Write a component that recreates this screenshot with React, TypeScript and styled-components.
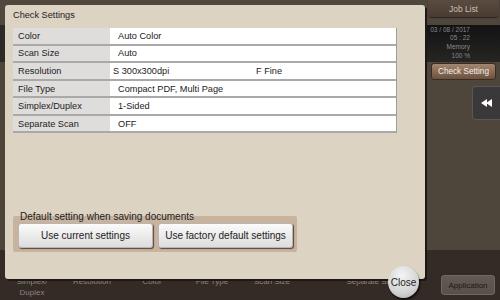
import * as React from 'react';
import styled, {createGlobalStyle} from "styled-components";

const GlobalStyle = createGlobalStyle`
  html, body {
    margin: 0;
    padding: 0;
    background: #342a26;
  }
  body {
    font-family: "Liberation Sans", Arial, sans-serif;
  }
`;

const rows = [
    {label: "Color", value: "Auto Color"},
    {label: "Scan Size", value: "Auto"},
    {label: "Resolution", value: "S 300x300dpi", extra: "F Fine"},
    {label: "File Type", value: "Compact PDF, Multi Page"},
    {label: "Simplex/Duplex", value: "1-Sided"},
    {label: "Separate Scan", value: "OFF"},
];

const tabs = [
    {label: "Simplex/\nDuplex"},
    {label: "Resolution"},
    {label: "Color"},
    {label: "File Type"},
    {label: "Scan Size"},
    {label: "Separate Scan", offset: 41},
];

export default function App() {
    return (
        <>
            <GlobalStyle/>
            <Screen>
                <MainArea>
                    <TopStrip/>
                    <DarkBand/>
                </MainArea>

                <SidePanel>
                    <JobList>Job List</JobList>
                    <StatusBox>
                        <StatusText>
                            <div>03 / 08 / 2017</div>
                            <div>05 : 22</div>
                            <div>Memory</div>
                            <div>100 %</div>
                        </StatusText>
                    </StatusBox>
                    <CheckSetting>Check Setting</CheckSetting>
                    <CollapseButton>
                        <svg width="12" height="8" viewBox="0 0 12 8">
                            <polygon points="0,4 6,0 6,8" fill="#fff"/>
                            <polygon points="5,4 11,0 11,8" fill="#fff"/>
                        </svg>
                    </CollapseButton>
                </SidePanel>

                <BottomBar>
                    <Tabs>
                        {tabs.map(t => (
                            <Tab key={t.label} $offset={t.offset ?? 0}>{t.label}</Tab>
                        ))}
                    </Tabs>
                    <AppButton>Application</AppButton>
                </BottomBar>

                <Dialog>
                    <Title>Check Settings</Title>
                    <Table>
                        {rows.map(r => (
                            <Row key={r.label}>
                                <LabelCell>{r.label}</LabelCell>
                                <ValueCell $tight={!!r.extra}>
                                    {r.extra ? <><Split>{r.value}</Split>{r.extra}</> : r.value}
                                </ValueCell>
                            </Row>
                        ))}
                    </Table>
                    <DefaultBox>
                        <Legend>Default setting when saving documents</Legend>
                        <ButtonRow>
                            <PlainButton>Use current settings</PlainButton>
                            <PlainButton>Use factory default settings</PlainButton>
                        </ButtonRow>
                    </DefaultBox>
                </Dialog>

                <CloseButton>Close</CloseButton>
            </Screen>
        </>
    );
}

const Screen = styled.div`
  position: relative;
  width: 500px;
  height: 300px;
  overflow: hidden;
  display: grid;
  grid-template-columns: 427px 73px;
  grid-template-rows: 250px 50px;
  background: #4d443a;
`;

const MainArea = styled.div`
  display: flex;
  flex-direction: column;
  background: #4d443a;
`;

const TopStrip = styled.div`
  height: 25px;
  background: #51483d;
`;

const DarkBand = styled.div`
  height: 37px;
  background: #2c2926;
`;

const SidePanel = styled.div`
  display: flex;
  flex-direction: column;
  background: #4e453b;
`;

const JobList = styled.div`
  height: 17px;
  margin: 0 1px 0 1px;
  border-radius: 0 0 4px 4px;
  background: linear-gradient(#5b4b3f, #4a3c32);
  box-shadow: 0 1px 1px rgba(0, 0, 0, 0.5);
  color: #c9bfb5;
  font-size: 8.4px;
  display: flex;
  align-items: center;
  justify-content: center;
`;

const StatusBox = styled.div`
  margin-top: 8px;
  height: 37px;
  background: linear-gradient(#131313, #262524);
  padding-left: 2px;
`;

const StatusText = styled.div`
  width: 41px;
  text-align: right;
  color: #8a8a8a;
  font-size: 6.5px;
  line-height: 8.7px;
  padding-top: 0.5px;
`;

const CheckSetting = styled.div`
  height: 15px;
  margin: 1px 4px 0 4px;
  border-radius: 3px;
  border: 1px solid #3a2c22;
  background: linear-gradient(#a3866f, #6c513f);
  color: #f3eee8;
  font-size: 8.2px;
  display: flex;
  align-items: center;
  justify-content: center;
`;

const CollapseButton = styled.div`
  margin-top: 6px;
  align-self: flex-end;
  width: 27px;
  height: 32px;
  border: 1px solid #5a5756;
  border-right: none;
  border-radius: 4px 0 0 4px;
  background: #3a3838;
  display: flex;
  align-items: center;
  justify-content: center;
`;

const BottomBar = styled.div`
  grid-column: 1 / 3;
  display: flex;
  background: #342a26;
`;

const Tabs = styled.div`
  flex: 1;
  display: flex;
  padding: 26px 0 0 2px;
`;

const Tab = styled.div<{ $offset: number }>`
  width: 60px;
  margin-left: ${p => p.$offset}px;
  text-align: center;
  white-space: pre-line;
  color: #8d8580;
  font-size: 8px;
  line-height: 11px;
`;

const AppButton = styled.div`
  margin: 25px 5px 0 0;
  width: 54px;
  height: 20px;
  box-sizing: border-box;
  border: 1px solid #6f695f;
  border-radius: 3px;
  background: linear-gradient(#625b52, #56504a);
  color: #1c1815;
  font-size: 8px;
  display: flex;
  align-items: center;
  justify-content: center;
`;

const Dialog = styled.div`
  position: absolute;
  left: 5px;
  top: 5px;
  width: 420px;
  height: 274px;
  box-sizing: border-box;
  padding: 0 8px 27px 8px;
  border-radius: 3px;
  background: #dcd3c3;
  box-shadow: 2px 2px 0 #1c1815;
  display: flex;
  flex-direction: column;
`;

const Title = styled.div`
  height: 23px;
  line-height: 20px;
  font-size: 9.2px;
  color: #222;
`;

const Table = styled.div`
  width: 384px;
  height: 105px;
  box-sizing: border-box;
  display: grid;
  grid-template-rows: repeat(6, 1fr);
  gap: 2px;
  padding-bottom: 1.5px;
  border-right: 1px solid #9d9d9d;
  background: #a9a9a9;
`;

const Row = styled.div`
  display: grid;
  grid-template-columns: 97px 1fr;
`;

const LabelCell = styled.div`
  background: #dfdcdc;
  padding-left: 5px;
  display: flex;
  align-items: center;
  font-size: 9.2px;
  color: #222;
`;

const ValueCell = styled.div<{ $tight: boolean }>`
  background: #fff;
  padding-left: ${p => p.$tight ? 3 : 8}px;
  display: flex;
  align-items: center;
  font-size: 9.2px;
  color: #222;
`;

const Split = styled.span`
  width: 143px;
`;

const DefaultBox = styled.div`
  margin-top: auto;
  width: 284px;
  box-sizing: border-box;
  padding: 0 4px 4px 5px;
  border-radius: 2px;
  background: #c8b39f;
`;

const Legend = styled.div`
  margin: -4px 0 1px 2px;
  line-height: 10px;
  font-size: 10px;
  color: #1e1e1e;
`;

const ButtonRow = styled.div`
  display: flex;
  gap: 5px;
`;

const PlainButton = styled.div`
  width: 135px;
  height: 25px;
  box-sizing: border-box;
  border-radius: 3px;
  border: 1px solid #b9b5b2;
  background: linear-gradient(#fbfbfb, #dedcdc);
  box-shadow: 1px 1px 1px rgba(60, 45, 35, 0.8);
  color: #222;
  font-size: 10px;
  display: flex;
  align-items: center;
  justify-content: center;
`;

const CloseButton = styled.div`
  position: absolute;
  left: 388px;
  top: 266px;
  width: 31px;
  height: 32px;
  border-radius: 50%;
  background: radial-gradient(circle at 45% 30%, #f4f4f4, #d4d4d4 60%, #a9a9a9);
  box-shadow: 1px 2px 2px rgba(0, 0, 0, 0.7);
  color: #222;
  font-size: 10px;
  display: flex;
  align-items: center;
  justify-content: center;
`;
